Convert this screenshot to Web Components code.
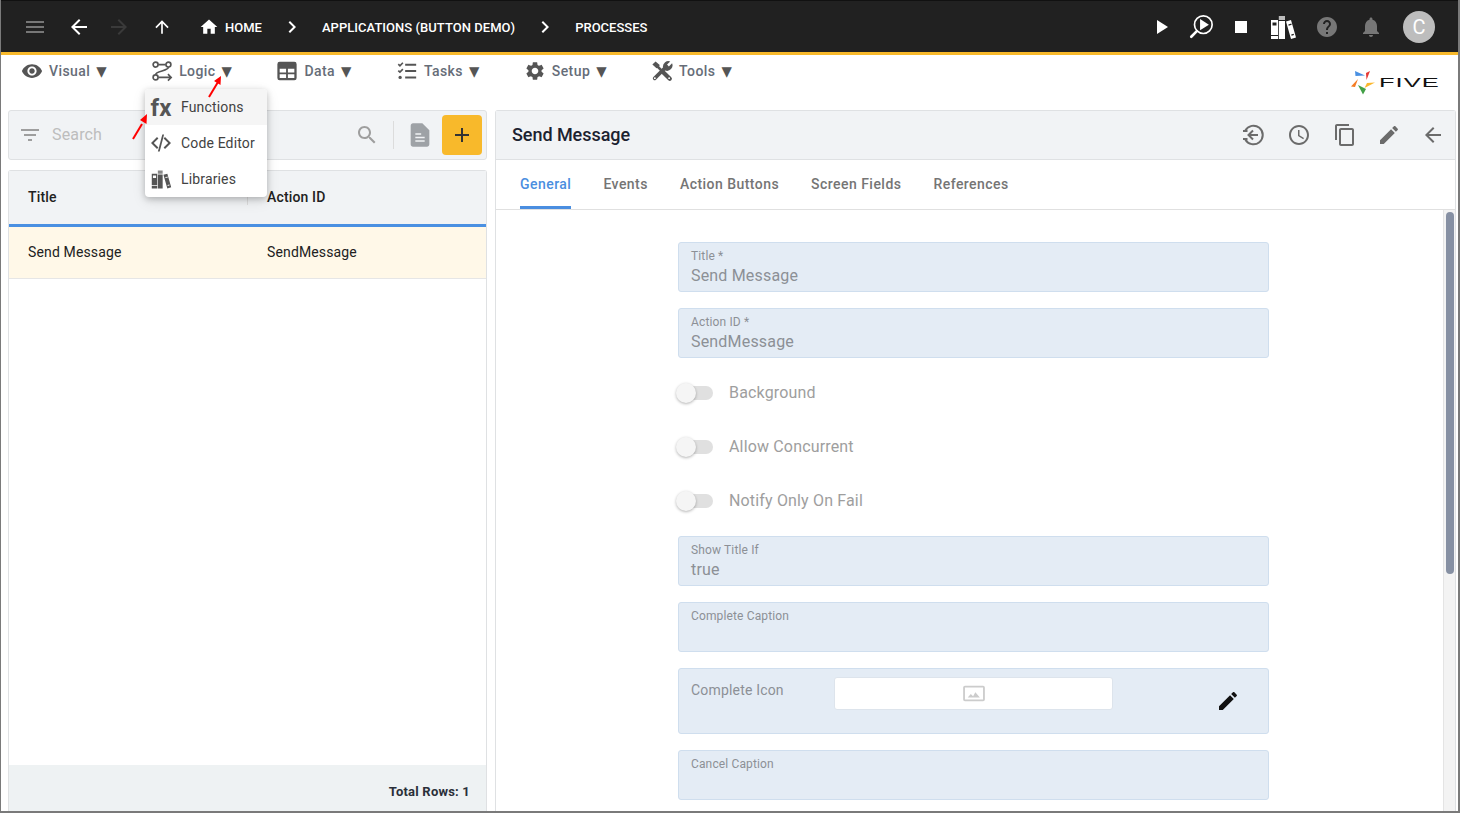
<!DOCTYPE html>
<html><head><meta charset="utf-8"><title>Processes</title>
<style>
html,body{margin:0;padding:0;background:#fff;font-family:Roboto,"Liberation Sans",sans-serif}
</style></head><body>
<app-frame></app-frame>
<script>
const P={
menu:'<path d="M3 18h18v-2H3v2zm0-5h18v-2H3v2zm0-7v2h18V6H3z"/>',
back:'<path d="M20 11H7.83l5.59-5.59L12 4l-8 8 8 8 1.41-1.41L7.83 13H20v-2z"/>',
forward:'<path d="M12 4l-1.41 1.41L16.17 11H4v2h12.17l-5.58 5.59L12 20l8-8z"/>',
up:'<path d="M4 12l1.41 1.41L11 7.83V20h2V7.83l5.58 5.59L20 12l-8-8-8 8z"/>',
home:'<path d="M10 20v-6h4v6h5v-8h3L12 3 2 12h3v8z"/>',
chev:'<path d="M10 6L8.59 7.41 13.17 12l-4.58 4.59L10 18l6-6z"/>',
play:'<path d="M8 5v14l11-7z"/>',
stop:'<path d="M6 6h12v12H6z"/>',
help:'<path d="M12 2C6.48 2 2 6.48 2 12s4.48 10 10 10 10-4.48 10-10S17.52 2 12 2zm1 17h-2v-2h2v2zm2.07-7.75l-.9.92C13.45 12.9 13 13.5 13 15h-2v-.5c0-1.1.45-2.1 1.17-2.83l1.24-1.26c.37-.36.59-.86.59-1.41 0-1.1-.9-2-2-2s-2 .9-2 2H8c0-2.21 1.79-4 4-4s4 1.79 4 4c0 .88-.36 1.68-.93 2.25z"/>',
bell:'<path d="M12 22c1.1 0 2-.9 2-2h-4c0 1.1.89 2 2 2zm6-6v-5c0-3.07-1.64-5.64-4.5-6.32V4c0-.83-.67-1.5-1.5-1.5s-1.5.67-1.5 1.5v.68C7.63 5.36 6 7.92 6 11v5l-2 2v1h16v-1l-2-2z"/>',
eye:'<path d="M12 4.5C7 4.5 2.73 7.61 1 12c1.73 4.39 6 7.5 11 7.5s9.27-3.11 11-7.5c-1.73-4.39-6-7.5-11-7.5zM12 17c-2.76 0-5-2.24-5-5s2.24-5 5-5 5 2.24 5 5-2.24 5-5 5zm0-8c-1.66 0-3 1.34-3 3s1.34 3 3 3 3-1.34 3-3-1.34-3-3-3z"/>',
logic:'<g fill="none" stroke="currentColor" stroke-width="1.800"><circle cx="5" cy="5" r="2.700"/><circle cx="19" cy="5" r="2.700"/><circle cx="5" cy="19" r="2.700"/><path d="M8 5h8M19 8c0 4-14 4-14 8M8 19h14M18.500 15.500L22 19l-3.500 3.500"/></g>',
table:'<path fill-rule="evenodd" d="M4 2h16a2.500 2.500 0 0 1 2.500 2.500v15a2.500 2.500 0 0 1-2.500 2.500H4a2.500 2.500 0 0 1-2.500-2.500v-15A2.500 2.500 0 0 1 4 2zm0 7.500v4h7v-4zm9 0v4h7v-4zm-9 6v4h7v-4zm9 0v4h7v-4z"/>',
tasks:'<path d="M10 4h12v2.200H10zM10 11h12v2.200H10zM10 18h12v2.200H10z"/><path fill="none" stroke="currentColor" stroke-width="1.800" d="M2.500 4.500l1.800 1.800L7.500 3M2.500 11.500l1.800 1.800L7.500 10"/><circle cx="4.500" cy="19" r="1.800"/>',
gear:'<path d="M19.14 12.94c.04-.3.06-.61.06-.94 0-.32-.02-.64-.07-.94l2.03-1.58c.18-.14.23-.41.12-.61l-1.92-3.32c-.12-.22-.37-.29-.59-.22l-2.39.96c-.5-.38-1.03-.7-1.62-.94l-.36-2.54c-.04-.24-.24-.41-.48-.41h-3.84c-.24 0-.43.17-.47.41l-.36 2.54c-.59.24-1.13.57-1.62.94l-2.39-.96c-.22-.08-.47 0-.59.22L2.74 8.87c-.12.21-.08.47.12.61l2.03 1.58c-.05.3-.09.63-.09.94s.02.64.07.94l-2.03 1.58c-.18.14-.23.41-.12.61l1.92 3.32c.12.22.37.29.59.22l2.39-.96c.5.38 1.03.7 1.62.94l.36 2.54c.05.24.24.41.48.41h3.84c.24 0 .44-.17.47-.41l.36-2.54c.59-.24 1.13-.56 1.62-.94l2.39.96c.22.08.47 0 .59-.22l1.92-3.32c.12-.22.07-.47-.12-.61l-2.01-1.58zM12 15.600c-1.98 0-3.600-1.620-3.600-3.600s1.620-3.600 3.600-3.600 3.600 1.620 3.600 3.600-1.620 3.600-3.600 3.600z"/>',
tools:'<g fill="none" stroke="currentColor" stroke-linecap="round"><path stroke-width="2.800" d="M6 6l7 7"/><path stroke-width="4.600" d="M13 13l7.500 7.500"/><path stroke-width="4" d="M4 20L15.500 8.500"/></g><path d="M1.500 5l3.500-3.500 4.500 4-1 2.500-2.500 1zM13 7.500a6 6 0 0 1 8-6l-3.500 3.500 2 2 3.500-3.500a6 6 0 0 1-7.500 8z"/><circle cx="19.800" cy="19.800" r="1" fill="#fff"/><circle cx="4.200" cy="19.800" r="1" fill="#fff"/>',
filter:'<path d="M10 18h4v-2h-4v2zM3 6v2h18V6H3zm3 7h12v-2H6v2z"/>',
search:'<path d="M15.5 14h-.79l-.28-.27C15.41 12.59 16 11.11 16 9.5 16 5.91 13.09 3 9.5 3S3 5.91 3 9.5 5.91 16 9.5 16c1.61 0 3.09-.59 4.23-1.57l.27.28v.79l5 4.99L20.49 19l-4.99-5zm-6 0C7.01 14 5 11.99 5 9.5S7.01 5 9.5 5 14 7.01 14 9.5 11.99 14 9.5 14z"/>',
doc:'<path d="M14 2H6c-1.1 0-1.99.9-1.99 2L4 20c0 1.1.89 2 1.99 2H18c1.1 0 2-.9 2-2V8z"/><path fill="#f1f3f5" d="M8 16.500h8v1.200H8zM8 13.500h8v1.200H8zM8 10.500h5v1.200H8z"/>',
add:'<path d="M19 13h-6v6h-2v-6H5v-2h6V5h2v6h6v2z"/>',
histback:'<g fill="none" stroke="currentColor" stroke-width="2"><path d="M4.300 7.500A9.300 9.300 0 1 1 4.300 16.500"/><path d="M17 12H7.500M12 7.500L7.500 12l4.500 4.500"/></g><path d="M2 7h4.500v2H2zM2 15h4.500v2H2z"/>',
clock:'<path d="M11.990 2C6.470 2 2 6.480 2 12s4.470 10 9.990 10C17.520 22 22 17.520 22 12S17.520 2 11.990 2zM12 20c-4.420 0-8-3.580-8-8s3.580-8 8-8 8 3.580 8 8-3.580 8-8 8zm.500-13H11v6l5.250 3.150.750-1.230-4.500-2.670z"/>',
copy:'<path d="M16 1H4c-1.100 0-2 .900-2 2v14h2V3h12V1zm3 4H8c-1.100 0-2 .900-2 2v14c0 1.100.900 2 2 2h11c1.100 0 2-.900 2-2V7c0-1.100-.900-2-2-2zm0 16H8V7h11v14z"/>',
edit:'<path d="M3 17.250V21h3.750L17.810 9.940l-3.750-3.750L3 17.250zM20.710 7.040c.390-.390.390-1.020 0-1.410l-2.340-2.340c-.390-.390-1.020-.390-1.410 0l-1.830 1.830 3.750 3.750 1.830-1.830z"/>',
code:'<path d="M9.400 16.600L4.800 12l4.600-4.600L8 6l-6 6 6 6 1.400-1.400zm5.200 0l4.600-4.600-4.600-4.600L16 6l6 6-6 6-1.400-1.400z"/><path d="M13.300 3.500h1.800L10.700 20.500H8.900z"/>',
books:'<path fill-rule="evenodd" d="M1 5h7v19H1zM2.500 7.500v3h4v-3zM1 20h7v1H1z"/><path d="M8.800 1H15v4H8.800z" opacity=".7"/><path d="M8.800 6H15v18H8.800z"/><path fill-rule="evenodd" d="M16 6.500l5-1.500 5 17.500-5 1.500zM18.300 9.500l.4 1.200 3-.9-.4-1.200zM21.200 19.500l.4 1.200 2.400-.7-.4-1.200z"/>',
searchplay:'<g fill="none" stroke="currentColor"><circle cx="16.500" cy="11.500" r="9.500" stroke-width="1.800"/><path stroke-width="2.800" stroke-linecap="round" d="M9.500 18.500L3.500 24.500"/></g><path d="M13 5.500v12l9.500-6z"/>',
image:'<path fill="none" stroke="currentColor" stroke-width="2" d="M2 3h20a1 1 0 0 1 1 1v13a1 1 0 0 1-1 1H2a1 1 0 0 1-1-1V4a1 1 0 0 1 1-1z"/><path d="M5 15l3.500-4 2.500 2.500 2.500-4.500 5 6z"/>'
};
const VB={books:'0 0 27 25',searchplay:'0 0 28 28',image:'0 0 24 21'};
class XIcon extends HTMLElement{
  connectedCallback(){
    const n=this.getAttribute('name'),s=this.getAttribute('size')||24;
    const r=this.shadowRoot||this.attachShadow({mode:'open'});
    r.innerHTML=`<style>:host{display:inline-flex;flex:none;line-height:0}svg{display:block;fill:currentColor}</style><svg width="${s}" height="${this.getAttribute('h')||s}" viewBox="${VB[n]||'0 0 24 24'}">${P[n]}</svg>`;
  }
}
customElements.define('x-icon',XIcon);

class AppFrame extends HTMLElement{
  constructor(){super();this.attachShadow({mode:'open'}).innerHTML=`<style>
  :host{display:flex;flex-direction:column;position:relative;box-sizing:border-box;width:1460px;height:813px;overflow:hidden;border-left:1px solid #7a7a7a;border-right:2px solid #7a7a7a;border-bottom:2px solid #7a7a7a;background:#fff;font-family:Roboto,"Liberation Sans",sans-serif}
  .main{flex:1;min-height:0;display:flex;gap:8px;padding:0 2px 0 7px}
  svg.arrows{position:absolute;left:0;top:0;pointer-events:none;z-index:5}
  </style>
  <top-bar></top-bar><menu-bar></menu-bar>
  <div class="main"><list-panel></list-panel><detail-panel></detail-panel></div>
  <drop-menu></drop-menu>
  <svg class="arrows" width="300" height="160" viewBox="0 0 300 160"><g stroke="#f00" stroke-width="2" fill="#f00"><path d="M208 97l9-15"/><path d="M132 139l9-15" /></g><path fill="#f00" d="M220 76l-.5 9-6.500-4zM146 114l-.5 10-6.500-4z"/></svg>`;}
}
customElements.define('app-frame',AppFrame);

class TopBar extends HTMLElement{
  constructor(){super();this.attachShadow({mode:'open'}).innerHTML=`<style>
  :host{display:flex;align-items:center;flex:none;box-sizing:content-box;height:50px;background:#212121;border-bottom:3px solid #f8b92b;border-top:1px solid #111;padding:1px 23px 0 22px;color:#fff;font:500 13px Roboto,sans-serif;white-space:nowrap}
  x-icon{color:#fff}
  .right{margin-left:auto;display:flex;align-items:center}
  .av{width:32px;height:32px;border-radius:50%;background:#bdbdbd;color:#fff;font:400 20px/32px Roboto,sans-serif;text-align:center;margin-left:20px}
  </style>
  <x-icon name="menu" style="color:#777"></x-icon>
  <x-icon name="back" style="margin-left:20px"></x-icon>
  <x-icon name="forward" style="margin-left:16px;color:#3a3a3a"></x-icon>
  <x-icon name="up" size="20" style="margin-left:21px"></x-icon>
  <x-icon name="home" size="20" style="margin-left:27px"></x-icon>
  <span style="margin-left:6px">HOME</span>
  <x-icon name="chev" style="margin-left:18px"></x-icon>
  <span style="margin-left:18px;letter-spacing:.04px">APPLICATIONS (BUTTON DEMO)</span>
  <x-icon name="chev" style="margin-left:18px"></x-icon>
  <span style="margin-left:18px">PROCESSES</span>
  <div class="right">
    <x-icon name="play"></x-icon>
    <x-icon name="searchplay" size="26" style="margin-left:15px"></x-icon>
    <x-icon name="stop" style="margin-left:15px"></x-icon>
    <x-icon name="books" size="27" style="margin-left:17px"></x-icon>
    <x-icon name="help" style="margin-left:18px;color:#777"></x-icon>
    <x-icon name="bell" style="margin-left:20px;color:#777"></x-icon>
    <div class="av">C</div>
  </div>`;}
}
customElements.define('top-bar',TopBar);

class MenuItem extends HTMLElement{
  connectedCallback(){
    if(this.shadowRoot)return;
    this.attachShadow({mode:'open'}).innerHTML=`<style>
    :host{display:flex;align-items:center;gap:6px;height:22px;color:#666d78;font:500 14px/22px Roboto,sans-serif;letter-spacing:.42px;white-space:nowrap}
    x-icon{color:#555}
    i{font:normal 13.5px/22px "DejaVu Sans",sans-serif;color:#555;letter-spacing:0}
    </style><x-icon name="${this.getAttribute('icon')}" size="22"></x-icon><span><slot></slot></span><i>▼</i>`;
  }
}
customElements.define('menu-item',MenuItem);

class MenuBar extends HTMLElement{
  constructor(){super();this.attachShadow({mode:'open'}).innerHTML=`<style>
  :host{display:flex;flex:none;height:55px;box-sizing:border-box;padding:5px 19px 0 20px;gap:44.5px;align-items:flex-start}
  five-logo{margin-left:auto;margin-top:11px}
  </style>
  <menu-item icon="eye">Visual</menu-item>
  <menu-item icon="logic">Logic</menu-item>
  <menu-item icon="table">Data</menu-item>
  <menu-item icon="tasks">Tasks</menu-item>
  <menu-item icon="gear">Setup</menu-item>
  <menu-item icon="tools">Tools</menu-item>
  <five-logo></five-logo>`;}
}
customElements.define('menu-bar',MenuBar);

class FiveLogo extends HTMLElement{
  constructor(){super();this.attachShadow({mode:'open'}).innerHTML=`<style>
  :host{display:flex;align-items:center;gap:4px;width:88px;height:24px;overflow:visible}
  span{display:inline-block;font:400 12px/24px "Liberation Sans",sans-serif;color:#111;letter-spacing:.5px;transform:scaleX(2.120);transform-origin:left center;white-space:nowrap}
  </style><svg width="24" height="24" viewBox="0 0 24 24"><path fill="#4a90e2" d="M4 0l10 4.500-9.500.5z"/><path fill="#e53935" d="M19 0l-3.500 9-.5-7z"/><path fill="#fbb72c" d="M24 11.500l-10.500 5.500 2.500-5z"/><path fill="#43a047" d="M7 14l8 4-3 5.500z"/><path fill="#f57c23" d="M7 8l-7 7.500 4 .5z"/></svg><span>FIVE</span>`;}
}
customElements.define('five-logo',FiveLogo);

class DropMenu extends HTMLElement{
  constructor(){super();this.attachShadow({mode:'open'}).innerHTML=`<style>
  :host{position:absolute;left:144px;top:89px;width:122px;background:#fff;border-radius:4px;box-shadow:0 2px 6px rgba(0,0,0,.22),0 4px 14px rgba(0,0,0,.1);z-index:4;overflow:hidden;font:400 14px/36px Roboto,sans-serif;color:#424242;letter-spacing:.15px}
  .r{display:flex;align-items:center;height:36px;position:relative;padding-left:36px}
  .r.a{background:#f5f5f5}
  .ic{position:absolute;left:4px;top:6px;width:24px;height:24px;color:#555;display:flex;align-items:center;justify-content:center}
  b{font:700 24px/24px Roboto,sans-serif;letter-spacing:0;color:#555;margin-top:2px}
  </style>
  <div class="r a"><span class="ic"><b>fx</b></span>Functions</div>
  <div class="r"><span class="ic"><x-icon name="code"></x-icon></span>Code Editor</div>
  <div class="r"><span class="ic"><x-icon name="books" size="21"></x-icon></span>Libraries</div>`;}
}
customElements.define('drop-menu',DropMenu);

class ListPanel extends HTMLElement{
  constructor(){super();this.attachShadow({mode:'open'}).innerHTML=`<style>
  :host{display:flex;flex-direction:column;flex:none;width:479px;gap:10px;min-height:0}
  .tb{flex:none;height:50px;box-sizing:border-box;border:1px solid #dfe1e3;border-radius:3px;background:#f1f3f5;display:flex;align-items:center;padding:0 4px 0 9px;color:#9e9e9e}
  .ph{font:400 16px Roboto,sans-serif;color:#bdbdbd;margin-left:10px;margin-top:-2px;letter-spacing:.15px}
  .sp{flex:1}
  .dv{width:1px;height:28px;background:#dcdcdc;margin:0 12px 0 14px}
  .add{width:40px;height:40px;border-radius:4px;background:#f8b92b;color:#333;display:flex;align-items:center;justify-content:center;margin-left:8px}
  .card{flex:1;min-height:0;display:flex;flex-direction:column;border:1px solid #dfe1e3;border-bottom:0;border-radius:3px 3px 0 0;font:400 14px Roboto,sans-serif;color:#212121;letter-spacing:.14px}
  .h{flex:none;display:grid;grid-template-columns:239px 1fr;height:51px;padding-bottom:2px;align-items:center;background:#f1f3f5;border-bottom:3px solid #4a90e2;padding-left:19px;font-weight:500;color:#212121;position:relative;letter-spacing:.15px}
  .h::after{content:"";position:absolute;left:238px;top:20px;width:1px;height:14px;background:#ddd}
  .row{flex:none;display:grid;grid-template-columns:239px 1fr;height:52px;padding-bottom:1px;align-items:center;background:#fff8e8;border-bottom:1px solid #e6e6e6;padding-left:19px;box-sizing:border-box}
  .sp2{flex:1}
  .ft{flex:none;height:46px;background:#eef2f3;display:flex;align-items:center;justify-content:flex-end;padding:6px 16px 0 0;box-sizing:border-box;font:700 13px Roboto,sans-serif;color:#2a2f38;letter-spacing:.2px}
  </style>
  <div class="tb"><x-icon name="filter"></x-icon><span class="ph">Search</span><span class="sp"></span>
    <x-icon name="search"></x-icon><span class="dv"></span><x-icon name="doc" size="28" style="color:#9ea2a6"></x-icon>
    <div class="add"><x-icon name="add"></x-icon></div></div>
  <div class="card">
    <div class="h"><span>Title</span><span>Action ID</span></div>
    <div class="row"><span>Send Message</span><span>SendMessage</span></div>
    <div class="sp2"></div>
    <div class="ft">Total Rows: 1</div>
  </div>`;}
}
customElements.define('list-panel',ListPanel);

class FormField extends HTMLElement{
  connectedCallback(){
    if(this.shadowRoot)return;
    const v=this.getAttribute('value')||'';
    this.attachShadow({mode:'open'}).innerHTML=`<style>
    :host{display:block;box-sizing:border-box;height:50px;margin-bottom:16px;background:#e4ecf5;border:1px solid #cfdeee;border-radius:3px;padding:6px 12px;color:#8c9096;flex:none}
    .l{font:400 12px/14px Roboto,sans-serif;letter-spacing:.14px}
    .v{font:400 16px/22px Roboto,sans-serif;margin-top:2px;letter-spacing:.18px}
    </style><div class="l">${this.getAttribute('label')}</div><div class="v">${v}</div>`;
  }
}
customElements.define('form-field',FormField);

class FormToggle extends HTMLElement{
  connectedCallback(){
    if(this.shadowRoot)return;
    this.attachShadow({mode:'open'}).innerHTML=`<style>
    :host{display:flex;align-items:center;height:54px;font:400 16px Roboto,sans-serif;color:#9e9e9e;letter-spacing:.16px}
    .t{width:36px;height:14px;border-radius:7px;background:#e0e0e0;position:relative;margin:0 16px 0 -1px;flex:none}
    .t::after{content:"";position:absolute;left:-1px;top:-3px;width:20px;height:20px;border-radius:50%;background:#f5f5f5;box-shadow:0 1px 3px rgba(0,0,0,.3)}
    .x{margin-top:-2px}
    </style><span class="t"></span><span class="x"><slot></slot></span>`;
  }
}
customElements.define('form-toggle',FormToggle);

class IconField extends HTMLElement{
  connectedCallback(){
    if(this.shadowRoot)return;
    this.attachShadow({mode:'open'}).innerHTML=`<style>
    :host{display:flex;align-items:flex-start;box-sizing:border-box;height:66px;margin-bottom:16px;background:#e4ecf5;border:1px solid #cfdeee;border-radius:3px;padding:8px 0 0 12px;color:#8c9096;flex:none;font:400 14px Roboto,sans-serif;letter-spacing:.18px}
    .l{width:143px;line-height:26px}
    .b{width:279px;height:33px;box-sizing:border-box;background:#fff;border:1px solid #dde4ec;border-radius:3px;display:flex;align-items:center;justify-content:center;color:#ccc}
    .e{margin:12px 0 0 103px;color:#111}
    </style><div class="l">${this.getAttribute('label')}</div><div class="b"><x-icon name="image" size="22" h="19"></x-icon></div><x-icon class="e" name="edit"></x-icon>`;
  }
}
customElements.define('icon-field',IconField);

class DetailPanel extends HTMLElement{
  constructor(){super();this.attachShadow({mode:'open'}).innerHTML=`<style>
  :host{display:flex;flex-direction:column;flex:1;min-width:0;border:1px solid #dfe1e3;border-bottom:0;border-radius:3px 3px 0 0;box-sizing:border-box;font-family:Roboto,sans-serif}
  .hd{flex:none;height:49px;box-sizing:border-box;background:#f1f3f5;border-bottom:1px solid #dfe1e3;display:flex;align-items:center;padding:0 10px 0 16px;color:#6b6b6b}
  .hd h2{margin:-2px auto 0 0;font:500 18px Roboto,sans-serif;color:#1c2230;letter-spacing:-.05px}
  .hd x-icon{margin-left:20px}
  .tabs{flex:none;height:50px;box-sizing:border-box;border-bottom:1px solid #e0e0e0;display:flex;gap:32px;padding-left:24px;font:500 14px/48px Roboto,sans-serif;color:#757575;letter-spacing:.46px}
  .tabs span{height:49px;box-sizing:border-box}
  .tabs .on{color:#4a8ee0;border-bottom:3px solid #4a8ee0;border-radius:2px 2px 0 0}
  .bd{flex:1;min-height:0;display:flex;overflow:hidden}
  .form{flex:1;min-width:0;padding:32px 0 0 182px;box-sizing:border-box;overflow:hidden}
  .in{width:591px;display:flex;flex-direction:column}
  .tg{margin:-8px 0 8px;flex:none}
  .sb{flex:none;width:12px;background:#f3f3f3;border-left:1px solid #e4e4e4;box-sizing:border-box;padding:2px 1px 0 1px}
  .th{width:8px;height:362px;border-radius:4px;background:#8690a3;margin-left:1px}
  </style>
  <div class="hd"><h2>Send Message</h2>
    <x-icon name="histback"></x-icon><x-icon name="clock" style="margin-left:22px"></x-icon><x-icon name="copy" style="margin-left:22px"></x-icon><x-icon name="edit"></x-icon><x-icon name="back"></x-icon></div>
  <div class="tabs"><span class="on">General</span><span>Events</span><span>Action Buttons</span><span>Screen Fields</span><span>References</span></div>
  <div class="bd"><div class="form"><div class="in">
    <form-field label="Title *" value="Send Message"></form-field>
    <form-field label="Action ID *" value="SendMessage"></form-field>
    <div class="tg"><form-toggle>Background</form-toggle><form-toggle>Allow Concurrent</form-toggle><form-toggle>Notify Only On Fail</form-toggle></div>
    <form-field label="Show Title If" value="true"></form-field>
    <form-field label="Complete Caption"></form-field>
    <icon-field label="Complete Icon"></icon-field>
    <form-field label="Cancel Caption"></form-field>
  </div></div><div class="sb"><div class="th"></div></div></div>`;}
}
customElements.define('detail-panel',DetailPanel);
</script>
</body></html>
